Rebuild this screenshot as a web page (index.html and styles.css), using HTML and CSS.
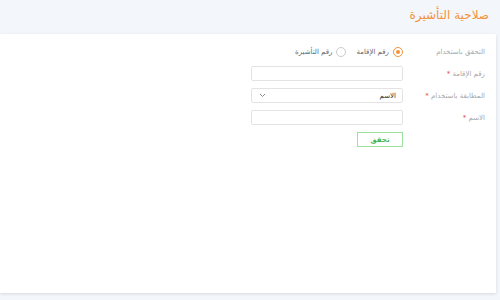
FILE: index.html
```html
<!DOCTYPE html>
<html lang="ar" dir="rtl">
<head>
<meta charset="UTF-8" />
<meta name="viewport" content="width=device-width, initial-scale=1" />
<title>صلاحية التأشيرة</title>
<link rel="stylesheet" href="styles.css">
</head>
<body>

<div class="page-head">
  <h1>صلاحية التأشيرة</h1>
</div>

<div class="card">
  <form class="check-form">
    <div class="row">
      <label class="row-label">التحقق باستخدام</label>
      <div class="radios">
        <label class="radio checked"><span class="dot"></span>رقم الإقامة</label>
        <label class="radio"><span class="dot"></span>رقم التأشيرة</label>
      </div>
    </div>

    <div class="row">
      <label class="row-label">رقم الإقامة <span class="req">*</span></label>
      <div class="field"></div>
    </div>

    <div class="row">
      <label class="row-label">المطابقة باستخدام <span class="req">*</span></label>
      <div class="field select">
        <span>الاسم</span>
        <svg width="7" height="5" viewBox="0 0 7 5"><path d="M1 1 L3.5 3.5 L6 1" fill="none" stroke="#888" stroke-width="1"/></svg>
      </div>
    </div>

    <div class="row">
      <label class="row-label">الاسم <span class="req">*</span></label>
      <div class="field"></div>
    </div>

    <div class="row">
      <span></span>
      <button type="button" class="btn">تحقق</button>
    </div>
  </form>
</div>

</body>
</html>
```

FILE: styles.css
```css
* {
  box-sizing: border-box;
}
body {
  margin: 0;
  background: #f3f6fa;
  font-family: "DejaVu Sans", sans-serif;
  width: 500px;
  height: 300px;
  overflow: hidden;
}
.page-head {
  height: 34px;
  padding: 5px 11px 0 0;
}
h1 {
  margin: 0;
  font-size: 12px;
  font-weight: normal;
  color: #f4923a;
  line-height: 20px;
}
.card {
  width: 496px;
  height: 259px;
  margin-right: auto;
  margin-left: 0;
  background: #fff;
  box-shadow: 0 1px 3px rgb(0 0 0 / 0.12);
  padding: 10px 11px 0 0;
}
.check-form {
  display: grid;
  gap: 7px;
}
.row {
  display: grid;
  grid-template-columns: 82px 152px;
  align-items: center;
  height: 15px;
}
.row-label {
  font-size: 7px;
  color: #a8a8a8;
}
.req {
  color: #e5484d;
}
.radios {
  display: flex;
  gap: 10px;
}
.radio {
  display: flex;
  align-items: center;
  gap: 4px;
  font-size: 7px;
  color: #666;
}
.dot {
  width: 10px;
  height: 10px;
  border: 1px solid #ccc;
  border-radius: 50%;
  display: flex;
  align-items: center;
  justify-content: center;
}
.radio.checked .dot {
  border-color: #f4923a;
}
.radio.checked .dot::after {
  content: "";
  width: 4px;
  height: 4px;
  border-radius: 50%;
  background: #f4923a;
}
.field {
  height: 15px;
  border: 1px solid #e3e3e3;
  border-radius: 2px;
  background: #fff;
}
.select {
  display: flex;
  align-items: center;
  justify-content: space-between;
  padding: 0 6px 0 7px;
  font-size: 7px;
  color: #333;
}
.btn {
  display: block;
  width: 46px;
  height: 15px;
  padding: 0;
  border: 1px solid #9ee09e;
  background: #fff;
  color: #45b649;
  font-family: inherit;
  font-size: 7px;
  font-weight: bold;
  cursor: pointer;
}
```
